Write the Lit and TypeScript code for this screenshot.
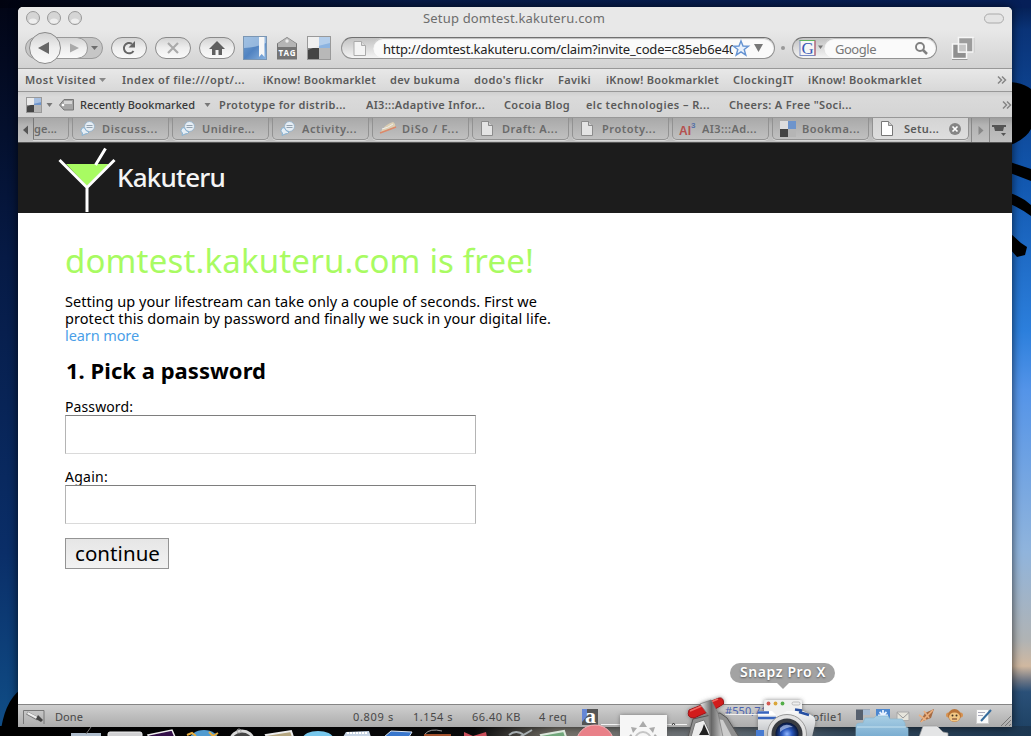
import { LitElement, html, svg, css } from "lit";
import { customElement, property } from "lit/decorators.js";

/** A single line of text tracked so that it fills a given width. */
@customElement("fit-text")
class FitText extends LitElement {
  @property({ type: Number }) w = 0;
  static styles = css`
    :host { display: inline-block; white-space: pre; flex: none; }
    span { display: inline-block; }
  `;
  render() {
    return html`<span><slot></slot></span>`;
  }
  firstUpdated() {
    const span = this.renderRoot.querySelector("span")!;
    const n = (this.textContent || "").length;
    const natural = span.getBoundingClientRect().width;
    this.style.width = this.w + "px";
    if (n > 1) span.style.letterSpacing = (this.w - natural) / n + "px";
  }
}

const page = (id: string) => svg`
  <path d="M1.5 .5H8.5L12.5 4.5V14.5H1.5Z" fill=${id === "on" ? "#fff" : "#e4e4e4"} stroke=${id === "on" ? "#777" : "#8c8c8c"}/>
  <path d="M8.5 .5V4.5H12.5" fill="#ccc" stroke="#777" stroke-width=".8"/>`;
const chat = svg`
  <circle cx="9.500" cy="5.500" r="5" fill="#e6eef5" stroke="#9db6ca"/>
  <path d="M6.500 4.500h6M6.500 6.500h6" stroke="#8a9aa8" stroke-width=".9"/>
  <path d="M1 9.500q0-3 3.200-3 1.500 4 4.800 4.500-1 2-4 2l-3 1.500.5-2.500Q1 11 1 9.500Z" fill="#e6eef5" stroke="#85b1d2"/>`;
const diso = svg`
  <path d="M0 12Q5 3 13 1Q16 3 15 6Z" fill="#dccfb3"/><path d="M0 12Q8 9 16 6" stroke="#dc8869" stroke-width="1.500" fill="none"/>
  <path d="M2 8Q8 7 13 3" stroke="#eee" fill="none"/>`;
const adaptive = svg`
  <text x="-1" y="14" font-family="Liberation Sans" font-weight="bold" font-size="12" fill="#b5504f">AI</text>
  <text x="11" y="7" font-family="Liberation Sans" font-weight="bold" font-size="8" fill="#5470a8">3</text>`;
const squares = svg`
  <path d="M0 0h8v8H0z" fill="#ddd"/><path d="M8 0h8v8H8z" fill="#6d94cc"/>
  <path d="M0 8h8v8H0z" fill="#444"/><path d="M8 8h8v8H8z" fill="#b5b5b5"/>`;

const BOOKMARKS: [string, number, number][] = [
  ["Index of file:///opt/...", 123, 18],
  ["iKnow! Bookmarklet", 113, 14],
  ["dev bukuma", 70, 14],
  ["dodo's flickr", 70, 14],
  ["Faviki", 33, 15],
  ["iKnow! Bookmarklet", 113, 14],
  ["ClockingIT", 61, 14],
  ["iKnow! Bookmarklet", 114, 0],
];
const RECENT: [string, number, number][] = [
  ["Prototype for distrib...", 127, 20],
  ["AI3:::Adaptive Infor...", 119, 19],
  ["Cocoia Blog", 66, 16],
  ["elc technologies – R...", 124, 19],
  ["Cheers: A Free \"Soci...", 123, 0],
];
const TABS: [string, number, any][] = [
  ["Discuss...", 56, chat],
  ["Unidire...", 53, chat],
  ["Activity...", 55, chat],
  ["DiSo / F...", 57, diso],
  ["Draft: A...", 56, page("off")],
  ["Prototy...", 54, page("off")],
  ["AI3:::Ad...", 55, adaptive],
  ["Bookma...", 58, squares],
];

@customElement("app-root")
class AppRoot extends LitElement {
  static styles = css`
    :host {
      display: block; position: relative; width: 1031px; height: 736px; overflow: hidden;
      font-family: "Noto Sans", "Open Sans", sans-serif; color: #000; background: #05102e;
    }
    svg { display: block; flex: none; overflow: visible; }
    .desktop, .dock { position: absolute; left: 0; top: 0; }
    .window {
      position: absolute; left: 18px; top: 7px; width: 994px; height: 720px;
      display: flex; flex-direction: column; border-radius: 5px 5px 0 0; overflow: hidden;
      box-shadow: 0 0 10px rgba(0,0,0,.7); background: #fff;
    }
    .title {
      height: 23px; flex: none; display: flex; align-items: center; background: #e8e8e8;
      padding: 0 8px; font-size: 13px; color: #6d6d6d;
    }
    .title svg { margin-top: -1px; }
    .title .name { margin: -2px auto 0 340px; line-height: 20px; }
    .tools {
      height: 39px; flex: none; box-sizing: border-box; border-bottom: 1px solid #989898;
      background: linear-gradient(#e8e8e8, #d2d2d2); display: flex; align-items: center; padding: 0 0 2px 7px;
    }
    .tools > svg { margin-right: 8px; }
    .field {
      height: 22px; box-sizing: border-box; border: 1px solid #929292; border-top-color: #707070; border-radius: 11px;
      display: flex; align-items: center; background: linear-gradient(#c2c2c2, #f4f4f4); flex: none; overflow: hidden;
    }
    .inner {
      display: flex; align-items: center; height: 20px; background: #fafafa; border-radius: 10px;
      box-shadow: inset 0 1px 1px #bbb; font-size: 13px; line-height: 18px; box-sizing: border-box;
    }
    .address { width: 434px; padding-left: 11px; }
    .address .inner { width: 402px; margin-left: 6px; padding-left: 10px; }
    .clip { width: 350px; overflow: hidden; color: #222; font-size: 13px; padding-top: 1px; }
    .search { width: 145px; margin-left: 7px; }
    .search .inner { width: 113px; padding-left: 11px; color: #777; padding-top: 1px; }
    .dot { width: 4px; height: 4px; border-radius: 2px; background: #999; margin-left: 6px; }
    .bar {
      height: 23px; flex: none; box-sizing: border-box; border-bottom: 1px solid #989898; display: flex; align-items: center;
      font-size: 11px; font-weight: 600; color: #5a5a5a; background: linear-gradient(#e8e8e8, #d8d8d8);
      padding-left: 7px; line-height: 20px;
    }
    .bar.two { height: 26px; padding-left: 8px; background: linear-gradient(#d0d0d0, #dadada 20%, #d4d4d4); }
    .bar .dark { color: #383838; font-weight: 500; }
    .arrow { margin-right: 16px; }
    .end { margin-left: auto; }
    .end.inset { margin-right: 5px; }
    .tabs {
      height: 25px; flex: none; box-sizing: border-box; display: flex; border-bottom: 1px solid #555;
      background: linear-gradient(#9e9e9e, #b4b4b4 30%, #c0c0c0); font-size: 11px; font-weight: 600; color: #6a6a6a;
    }
    .tab {
      width: 97px; height: 22px; box-sizing: border-box; margin-right: 3px; border: 1px solid #929292; border-top: 0;
      border-radius: 0 0 5px 5px; display: flex; align-items: center; padding-left: 7px;
      background: linear-gradient(#a9a9a9, #c0c0c0); box-shadow: 0 1px 0 #d8d8d8; flex: none;
    }
    .tab svg { margin-right: 6px; }
    .tab.first { width: 36px; margin-left: 0; padding: 0; border-left: 1px solid #777; border-radius: 0 0 5px 0; }
    .tab.on { background: linear-gradient(#d4d4d4, #dedede); color: #5a5a5a; padding-left: 7px; }
    .tab.on svg { margin-right: 8px; }
    .side { width: 15px; display: flex; align-items: center; flex: none; }
    .side.next { width: 17px; margin-left: -1px; justify-content: center; border-left: 1px solid #888; border-right: 1px solid #888; }
    .side.menu { padding-left: 2px; }
    .brand {
      height: 70px; flex: none; box-sizing: border-box; background: #1c1c1c; padding-left: 40px; display: flex; color: #f4f4f4;
      font-size: 26px; line-height: 69px; font-weight: 500;
    }
    .brand svg { margin-right: 2px; }
    .content { height: 491px; flex: none; box-sizing: border-box; padding: 26px 0 0 47px; }
    h1 { margin: 0; font-weight: 450; font-size: 33px; line-height: 43px; color: #a8fb62; height: 54px; }
    .intro { margin: 0; font-size: 14.500px; line-height: 17px; display: flex; flex-direction: column; }
    .link { color: #4a9fe8; }
    h2 { margin: 11px 0 0; font-size: 22px; line-height: 30px; font-weight: 700; height: 43px; padding-left: 1px; }
    label { display: flex; flex-direction: column; font-size: 14px; line-height: 17px; height: 70px; }
    input {
      width: 411px; height: 39px; box-sizing: border-box; border: 1px solid; border-color: #7e7e7e #b4b4b4 #dadada #b4b4b4;
      margin: 0; padding: 0 6px; border-radius: 0; background: #fff; font-size: 20px;
    }
    button {
      width: 104px; height: 31px; box-sizing: border-box; display: flex; align-items: center; margin: 0; border: 1px solid #949494;
      background: linear-gradient(#e6e6e6, #f2f2f2); border-radius: 0; padding: 0 9px 2px; font: 20.500px "Noto Sans", sans-serif; color: #000;
    }
    .status {
      height: 23px; flex: none; box-sizing: border-box; border-top: 1px solid #858585; display: flex; align-items: center;
      background: linear-gradient(#cfcfcf, #acacac); font-size: 11px; color: #484848; padding-left: 5px; padding-top: 2px; line-height: 18px;
    }
    .coords { color: #4a62b0; margin: -12px 34px 0 126px; }
    .tip {
      position: absolute; left: 730px; top: 663px; width: 105px; height: 20px; border-radius: 10px; background: #a3a3a3;
      color: #fff; font-size: 14px; font-weight: 600; line-height: 18px; padding-left: 10px; box-sizing: border-box; text-shadow: 0 1px 2px #555;
    }
    .tip::after { content: ""; position: absolute; left: 47px; top: 20px; border: 6px solid transparent; border-top-color: #a3a3a3; border-bottom: 0; }
  `;

  desktop() {
    return html`<svg class="desktop" width="1031" height="736" viewBox="0 0 1031 736">
      <defs>
        <linearGradient id="dl" x2="0" y2="1"><stop offset="0" stop-color="#020515"/><stop offset=".35" stop-color="#061a45"/><stop offset=".75" stop-color="#0a2e68"/><stop offset="1" stop-color="#104f88"/></linearGradient>
        <linearGradient id="dr" x2="0" y2="1"><stop offset="0" stop-color="#041b4c"/><stop offset=".04" stop-color="#0a3377"/><stop offset=".25" stop-color="#1258b0"/><stop offset=".45" stop-color="#2c7fdc"/><stop offset=".53" stop-color="#5494e8"/><stop offset=".75" stop-color="#90b4dc"/><stop offset=".87" stop-color="#b0b3b4"/><stop offset=".905" stop-color="#d0b8a0"/><stop offset=".925" stop-color="#6a7484"/><stop offset=".94" stop-color="#2a5078"/><stop offset="1" stop-color="#1c3f60"/></linearGradient>
        <linearGradient id="dt"><stop offset="0" stop-color="#010310"/><stop offset=".4" stop-color="#071b48"/><stop offset="1" stop-color="#061f58"/></linearGradient>
        <linearGradient id="db"><stop offset="0" stop-color="#000"/><stop offset=".46" stop-color="#0a0a0b"/><stop offset=".54" stop-color="#78746b"/><stop offset=".68" stop-color="#6d747a"/><stop offset=".82" stop-color="#33485b"/><stop offset="1" stop-color="#1c3752"/></linearGradient>
      </defs>
      <rect width="20" height="736" fill="url(#dl)"/>
      <rect x="1010" width="21" height="736" fill="url(#dr)"/>
      <rect width="1031" height="8" fill="url(#dt)"/>
      <rect y="726" width="1031" height="10" fill="url(#db)"/>
      <path d="M20 690Q4 702 0 736H20Z" fill="#000"/>
      <path d="M1010 82Q1024 83 1031 89V129Q1026 139 1010 145ZM1010 162L1031 169V181L1010 173ZM1010 193Q1022 197 1031 205V216Q1022 209 1010 204ZM1010 233L1021 243 1027 247 1025 255 1017 257 1010 249Z" fill="#000"/>
    </svg>`;
  }

  dock() {
    return html`<svg class="dock" width="1031" height="736" viewBox="0 0 1031 736">
      <defs>
        <linearGradient id="fold" x2="0" y2="1"><stop stop-color="#a9cfe5"/><stop offset="1" stop-color="#79acd0"/></linearGradient>
        <linearGradient id="metal"><stop stop-color="#eee"/><stop offset=".5" stop-color="#666"/><stop offset="1" stop-color="#ccc"/></linearGradient>
        <linearGradient id="body" x2="0" y2="1"><stop stop-color="#fafafa"/><stop offset="1" stop-color="#b9bcc0"/></linearGradient>
        <radialGradient id="lens"><stop stop-color="#8fb6ff"/><stop offset=".45" stop-color="#2856bb"/><stop offset="1" stop-color="#071537"/></radialGradient>
        <filter id="glow" x="-30%" y="-30%" width="160%" height="160%"><feDropShadow dx="0" dy="0" stdDeviation="2" flood-color="#555" flood-opacity=".7"/></filter>
      </defs>
      <path d="M71 736V733H101V736Z" fill="#aebccb"/><path d="M86 734l5-7" stroke="#777"/>
      <rect x="108" y="732" width="34" height="8" rx="2" fill="#d0d0d2" stroke="#eee"/>
      <path d="M148 735L172 730 175 737H149Z" fill="#34104a" stroke="#eee" stroke-width="1.500"/>
      <ellipse cx="204" cy="741" rx="15" ry="11" fill="#519bd0"/><path d="M187 735l5-2 4 3M209 732l4 4 5-3" stroke="#e6ac3f" stroke-width="2" fill="none"/>
      <ellipse cx="242" cy="740" rx="11" ry="9" fill="#444" stroke="#d9d9d9" stroke-width="3"/><circle cx="239" cy="731" r="2" fill="none" stroke="#aaa"/>
      <path d="M266 735L291 731 293 737H267Z" fill="#b5a680" stroke="#eee" stroke-width="2"/>
      <ellipse cx="318" cy="738" rx="15" ry="7" fill="#77c7ec"/>
      <path d="M343 737L346 732 369 731 371 737Z" fill="#c6d4e4"/><path d="M347 733h21" stroke="#fff" stroke-dasharray="2 1" stroke-width="2"/>
      <path d="M384 737L391 731 412 732 409 737Z" fill="#3876cc" stroke="#dce7f5"/>
      <path d="M424 734H451V737H424Z" fill="#a14f2b"/><path d="M425 734Q430 728 442 731" stroke="#999" fill="none"/>
      <path d="M464 732L473 736 486 732 487 737H464Z" fill="#c94d59"/>
      <path d="M509 735Q516 729 524 735M520 737L532 730" stroke="#a7aeb1" stroke-width="2" fill="none"/>
      <path d="M541 735L564 731 566 737H542Z" fill="#71a77b" stroke="#dce8dc" stroke-width="2"/>
      <circle cx="595" cy="744" r="19" fill="#e98088" stroke="#f4b5b9"/>
      <path d="M601 724.500H620M667 724.500H687M725 714.500H758" stroke="#f2f2f2"/><path d="M672 725l1.500-2 1.500 2" fill="none" stroke="#333"/>
      <rect x="620" y="715" width="47" height="25" fill="#f6f6f6" filter="url(#glow)"/>
      <path d="M643 721l4 6h-8zM631 727l6 1-4 5zM655 727l-6 1 4 5zM628 737l3-3 2 3zM658 737l-3-3-2 3z" fill="#aaa"/><circle cx="643" cy="740" r="8" fill="none" stroke="#c5c5c5" stroke-width="2"/>
      <g filter="url(#glow)"><path d="M693 719L720 713 727 718 739 737H688Z" fill="#8f8f8f" stroke="#555"/><path d="M695 723L704 720 712 737H691Z" fill="#ececec" stroke="#777"/><path d="M717 719L723 720 732 737H722Z" fill="#ccc"/>
        <path d="M699 735L702 730 704 724 709 735Z" fill="#222"/>
        <path d="M689 710L719 698Q724 697 723.500 704L717 708 694 718Q686 718 689 710Z" fill="#d21d1f" stroke="#9b1117"/>
        <path d="M690 711L718 699" stroke="#ef6a62" stroke-width="1.500"/>
        <path d="M700 704L711 700 718 713 723 737H710L709 716Z" fill="url(#metal)" stroke="#777" stroke-width=".7"/></g>
      <g filter="url(#glow)"><rect x="764" y="700" width="38" height="20" rx="2" fill="#f0f0f0"/>
        <path d="M758 711H772L776 715H758Z" fill="#fff"/>
        <path d="M758 715H780L787 711 803 711 813 716Q816 718 815 724L812 737H758Z" fill="url(#body)"/></g>
      <path d="M758 712.500h11M758 718h18" stroke="#3764bd" stroke-width="2.500"/><path d="M756 730h8v7h-8z" fill="#477bd1"/>
      <path d="M795 709.500l7 1M799 712l10 3" stroke="#254ea1" stroke-width="2.500"/>
      <circle cx="768.500" cy="703.500" r="1.900" fill="#d45a51"/><circle cx="775.500" cy="703.500" r="1.900" fill="#daa63a"/><circle cx="782.500" cy="703.500" r="1.900" fill="#54ae48"/>
      <rect x="792" y="702" width="8" height="3" rx="1.500" fill="#eee" stroke="#aaa" stroke-width=".7"/>
      <circle cx="787" cy="734" r="19.500" fill="#e2e2e2" stroke="#999"/><circle cx="787" cy="734" r="15.500" fill="#3a3d42"/><circle cx="787" cy="734" r="11.500" fill="url(#lens)"/><path d="M780 728Q786 722 793 727Q786 727 780 732Z" fill="#cfe0ff" opacity=".6"/>
      <path d="M856 726Q856 723 860 723H863L865 718H874L876 716H888L890 719H902L905 723V727L908 728V737H856Z" fill="url(#fold)" stroke="#8bb8d0" stroke-width=".7"/><path d="M857 727H906" stroke="#c5e1ef"/>
      <path d="M919 737L923 726H937L943 732 948 733V737Z" fill="#e4e5e6" stroke="#999" stroke-width=".7"/>
    </svg>`;
  }

  render() {
    const pill = (icon: any) => html`<svg width="36" height="22" viewBox="0 0 36 22"><rect x=".5" y=".5" width="35" height="21" rx="10.500" fill="url(#pill)" stroke="#8a8a8a"/>${icon}</svg>`;
    const light = (x: number) => svg`<circle cx=${x} cy="7" r="6.500" fill="#d5d5d5" stroke="#999"/><ellipse cx=${x} cy="10" rx="4" ry="2.500" fill="#eee"/>`;
    const item = ([t, w, g]: [string, number, number]) => html`<fit-text .w=${w} style="margin-right:${g}px">${t}</fit-text>`;
    const more = (cls: string) => html`<svg class="end ${cls}" width="10" height="8" viewBox="0 0 10 8"><path d="M1 .5L4.500 4 1 7.500M5 .5L8.500 4 5 7.500" fill="none" stroke="#858585" stroke-width="1.500"/></svg>`;
    return html`
      ${this.desktop()}
      <div class="window">
        <div class="title">
          <svg width="57" height="14" viewBox="0 0 57 14">${light(7)}${light(28)}${light(49)}</svg>
          <fit-text class="name" .w=${182}>Setup domtest.kakuteru.com</fit-text>
          <svg width="20" height="9" viewBox="0 0 20 9"><rect x=".5" y="0" width="19" height="9" rx="4.500" fill="#e4e4e4" stroke="#aaa"/></svg>
        </div>
        <div class="tools">
          <svg width="78" height="32" viewBox="0 0 78 32">
            <defs><linearGradient id="pill" x2="0" y2="1"><stop stop-color="#d2d2d2"/><stop offset=".5" stop-color="#eee"/><stop offset="1" stop-color="#fafafa"/></linearGradient></defs>
            <rect x=".5" y="5.500" width="77" height="21" rx="10.500" fill="#c6c6c6" stroke="#999"/>
            <path d="M25 5.500H52Q62.500 7 62.500 16T52 26.500H25Z" fill="url(#pill)" stroke="#999"/>
            <circle cx="20" cy="16" r="15.500" fill="url(#pill)" stroke="#8a8a8a"/>
            <path d="M24 10V22L13 16Z" fill="#666"/><path d="M45 11.500V20.500L54 16Z" fill="#aaa"/><path d="M66 14H73L69.500 18Z" fill="#6d6d6d"/>
          </svg>
          ${pill(svg`<path d="M21 6.800A5.200 5.200 0 1 0 22.500 14" fill="none" stroke="#666" stroke-width="2"/><path d="M24 4V10.500H17.500Z" fill="#666"/>`)}
          ${pill(svg`<path d="M13 6L23 16M23 6L13 16" stroke="#aaa" stroke-width="2.200"/>`)}
          ${pill(svg`<path d="M18 4L26 12H23V18H19.500V13H16.500V18H13V12H10Z" fill="#606060"/>`)}
          <svg width="24" height="24" viewBox="0 0 24 24">
            <defs><linearGradient id="book" x2="1" y2="1"><stop stop-color="#729fcf"/><stop offset=".5" stop-color="#5183c1"/><stop offset="1" stop-color="#8bb4e0"/></linearGradient></defs>
            <rect x=".5" y=".5" width="23" height="23" fill="url(#book)" stroke="#7b96b3"/><path d="M1 1H23V7Q12 12 1 12Z" fill="#b9d3ec" opacity=".65"/><path d="M16 1H21.500V21L18.700 18 16 21Z" fill="#f6f6f6"/>
          </svg>
          <svg width="24" height="24" viewBox="0 0 24 24">
            <path d="M2 7.500L12 1 22 7.500V23.500H2Z" fill="#747474"/><path d="M3 7.500L12 1.500 21 7.500V11H3Z" fill="#b5b5b5"/><circle cx="12" cy="5" r="1.700" fill="#eee"/>
            <text x="3.500" y="20" font-size="8" font-weight="bold" fill="#fff" textLength="17">TAG</text>
          </svg>
          <svg width="24" height="24" viewBox="0 0 24 24"><rect width="24" height="24" fill="#999"/><path d="M1 1H12V12H1Z" fill="#e9e9e9"/><path d="M12 1H23V12H12Z" fill="#8db4e1"/><path d="M1 12H12V23H1Z" fill="#444"/><path d="M12 12H23V23H12Z" fill="#b8b8b8"/><path d="M1 1H23V7Q12 9 1 14Z" fill="#fff" opacity=".35"/></svg>
          <div class="field address" style="margin-left:2px">
            <svg width="14" height="15" viewBox="0 0 14 15"><path d="M1 .5H8.500L12.500 4.500V14.500H1Z" fill="#f4f4f4" stroke="#aaa"/><path d="M8.500 .5V4.500H12.500" fill="#ddd" stroke="#aaa"/></svg>
            <div class="inner">
              <div class="clip"><fit-text .w=${361}>http://domtest.kakuteru.com/claim?invite_code=c85eb6e40b</fit-text></div>
              <svg width="16" height="16" viewBox="0 0 16 16"><path d="M8 1L10 6 15.500 6.200 11.200 9.500 12.800 15 8 11.800 3.200 15 4.800 9.500 .5 6.200 6 6Z" fill="#e9f1fb" stroke="#6593d2" stroke-width="1.400"/></svg>
              <svg width="18" height="8" viewBox="0 0 18 8"><path d="M5 0H14L9.500 8Z" fill="#777"/></svg>
            </div>
          </div>
          <div class="dot"></div>
          <div class="field search">
            <svg width="31" height="20" viewBox="0 0 31 20"><rect x="7" y="2.500" width="15" height="15" fill="#f6f6f6" stroke="#7a8cc5"/><path d="M6.500 2.500H22" stroke="#5fb45f"/><path d="M22 2.500V17.500" stroke="#c55"/>
              <text x="8.500" y="15.500" font-family="Liberation Serif" font-size="17" fill="#3858b5">G</text><path d="M25 7.500H30L27.500 11Z" fill="#777"/></svg>
            <div class="inner"><fit-text .w=${41}>Google</fit-text>
              <svg width="55" height="14" viewBox="0 0 55 14"><circle cx="44" cy="5" r="4" fill="none" stroke="#808080" stroke-width="1.900"/><path d="M47 8L51 12" stroke="#808080" stroke-width="2.500"/></svg>
            </div>
          </div>
          <svg width="24" height="24" viewBox="0 0 24 24" style="margin-left:14px"><rect x="1.500" y="8" width="14" height="14.500" fill="#8f8f8f" stroke="#f6f6f6" stroke-width="1.500"/><path d="M1 23.500H16.500M22.700 16.500V2" stroke="#999" fill="none"/><rect x="7.500" y="1.500" width="14.500" height="14.500" fill="#9c9c9c" stroke="#f6f6f6" stroke-width="1.500"/><rect x="7.500" y="8" width="8" height="8" fill="#c5c5c5" stroke="#f6f6f6" stroke-width="1.300"/></svg>
        </div>
        <div class="bar">
          <fit-text .w=${71} style="margin-right:3px">Most Visited</fit-text><svg class="arrow" width="7" height="4" viewBox="0 0 7 4"><path d="M0 0H7L3.500 4Z" fill="#888"/></svg>
          ${BOOKMARKS.map(item)}
          ${more("inset")}
        </div>
        <div class="bar two">
          <svg width="16" height="16" viewBox="0 0 16 16">${squares}<path d="M0 0H16V5Q8 6 0 10Z" fill="#fff" opacity=".4"/><rect x=".5" y=".5" width="15" height="15" fill="none" stroke="#999"/></svg>
          <svg width="17" height="4" viewBox="0 0 17 4"><path d="M4.500 0H10.500L7.500 4Z" fill="#777"/></svg>
          <svg width="21" height="12" viewBox="0 0 21 12"><path d="M.5 6L5 .5H14.500V11H5Z" fill="#a5a5a5" stroke="#777"/><path d="M5 2H13V5H5Z" fill="#d5d5d5"/><circle cx="4" cy="6" r="1.300" fill="#fff"/></svg>
          <fit-text class="dark" .w=${115}>Recently Bookmarked</fit-text>
          <svg width="24" height="4" viewBox="0 0 24 4"><path d="M9.500 0H15.500L12.500 4Z" fill="#777"/></svg>
          ${RECENT.map(item)}
          ${more("")}
        </div>
        <div class="tabs">
          <div class="side"><svg width="15" height="10" viewBox="0 0 15 10"><path d="M10 .5V9.500L5 5Z" fill="#555"/></svg></div>
          <div class="tab first"><fit-text .w=${23}>ge...</fit-text></div>
          ${TABS.map(([t, w, icon]) => html`<div class="tab"><svg width="16" height="16" viewBox="0 0 16 16">${icon}</svg><fit-text .w=${w}>${t}</fit-text></div>`)}
          <div class="tab on"><svg width="16" height="16" viewBox="0 0 16 16">${page("on")}</svg><fit-text .w=${35}>Setu...</fit-text>
            <svg width="22" height="12" viewBox="0 0 22 12"><circle cx="16" cy="6" r="6" fill="#858585"/><path d="M13.500 3.500L18.500 8.500M18.500 3.500L13.500 8.500" stroke="#fff" stroke-width="1.700"/></svg></div>
          <div class="side next"><svg width="6" height="9" viewBox="0 0 6 9"><path d="M.5 0V9L5.500 4.500Z" fill="#888"/></svg></div>
          <div class="side menu"><svg width="15" height="12" viewBox="0 0 15 12"><path d="M0 1H14V3H12L11 7H3L2 3H0Z" fill="#555"/><path d="M9 9H14L11.500 12Z" fill="#555"/></svg></div>
        </div>
        <div class="brand">
          <svg width="57" height="70" viewBox="58 143 57 70"><path d="M66 164H109L87 186Z" fill="#a8fb62"/><path d="M59.500 160L87 187.500 114.500 160M87 186V212M95.500 165L105.500 148.500" fill="none" stroke="#fff" stroke-width="3"/></svg>
          <fit-text .w=${108}>Kakuteru</fit-text>
        </div>
        <div class="content">
          <h1><fit-text .w=${469}>domtest.kakuteru.com is free!</fit-text></h1>
          <p class="intro">
            <fit-text .w=${472}>Setting up your lifestream can take only a couple of seconds. First we</fit-text>
            <fit-text .w=${486}>protect this domain by password and finally we suck in your digital life.</fit-text>
            <fit-text class="link" .w=${74}>learn more</fit-text>
          </p>
          <h2><fit-text .w=${200}>1. Pick a password</fit-text></h2>
          <label><fit-text .w=${68}>Password:</fit-text><input type="password" /></label>
          <label><fit-text .w=${43}>Again:</fit-text><input type="password" /></label>
          <button><fit-text .w=${85}>continue</fit-text></button>
        </div>
        <div class="status">
          <svg width="32" height="15" viewBox="0 0 32 15"><path d="M.5 14V.5H21V14" fill="none" stroke="#777"/><path d="M4 3L15 9" stroke="#777" stroke-width="3.500"/><path d="M4.500 3L14 8" stroke="#eee" stroke-width="2"/><path d="M13 9L15 5 20 10 18 12Z" fill="#444"/></svg>
          <fit-text .w=${28} style="margin-right:270px">Done</fit-text>
          <fit-text .w=${41} style="margin-right:19px">0.809 s</fit-text>
          <fit-text .w=${40} style="margin-right:19px">1.154 s</fit-text>
          <fit-text .w=${49} style="margin-right:18px">66.40 KB</fit-text>
          <fit-text .w=${28} style="margin-right:15px">4 req</fit-text>
          <svg width="17" height="16" viewBox="0 0 17 16"><path d="M0 0H16V16H0Z" fill="#555"/><path d="M0 0H5V7L0 13Z" fill="#6587d6"/><text x="3" y="14" font-family="Liberation Serif" font-weight="bold" font-size="22" fill="#fff">a</text></svg>
          <fit-text class="coords" .w=${42}>#550,71</fit-text>
          <fit-text .w=${42} style="margin-right:12px">Profile1</fit-text>
          <svg width="157" height="18" viewBox="855 707 157 18">
            <path d="M856 708.500H870V719H856Z" fill="#56606e"/><path d="M863 708.500H870V714H863Z" fill="#a8bdd4"/><path d="M863 714H870V719H863Z" fill="#bbb"/>
            <rect x="876" y="708" width="14" height="14" fill="#4c87d0"/><path d="M883 709V720M878 714.500H888M879.500 711L886.500 718M886.500 711L879.500 718" stroke="#e8f2ff" stroke-width="1.800"/>
            <path d="M897 711H909V719.500H897Z" fill="#e6e5dc" stroke="#aaa"/><path d="M897 711.500L903 717 909 711.500" fill="none" stroke="#999"/>
            <path d="M920 721L925 712 934 708 931 717Z" fill="#a76b42"/><path d="M921 721L933 709M919 714L926 719M924 710L929 717" stroke="#ebb181" stroke-width="1.600"/>
            <circle cx="948.500" cy="714" r="2.500" fill="#d69251"/><circle cx="960.500" cy="714" r="2.500" fill="#d69251"/><circle cx="954.500" cy="714.500" r="6.500" fill="#b97438"/><ellipse cx="954.500" cy="716" rx="5.500" ry="4.500" fill="#f2c784"/><circle cx="952.500" cy="714.500" r="1" fill="#432"/><circle cx="956.500" cy="714.500" r="1" fill="#432"/><path d="M952 718H957" stroke="#632"/>
            <rect x="976.500" y="708.500" width="12" height="14" fill="#fafafa" stroke="#ccc"/><path d="M978 711.500H985M978 714.500H983" stroke="#aab"/><path d="M981 720L991 709" stroke="#356b9c" stroke-width="2"/>
            <path d="M1001 725L1011 715M1005 725L1011 719M1009 725L1011 723" stroke="#777"/>
          </svg>
        </div>
      </div>
      ${this.dock()}
      <div class="tip"><fit-text .w=${86}>Snapz Pro X</fit-text></div>
    `;
  }
}
